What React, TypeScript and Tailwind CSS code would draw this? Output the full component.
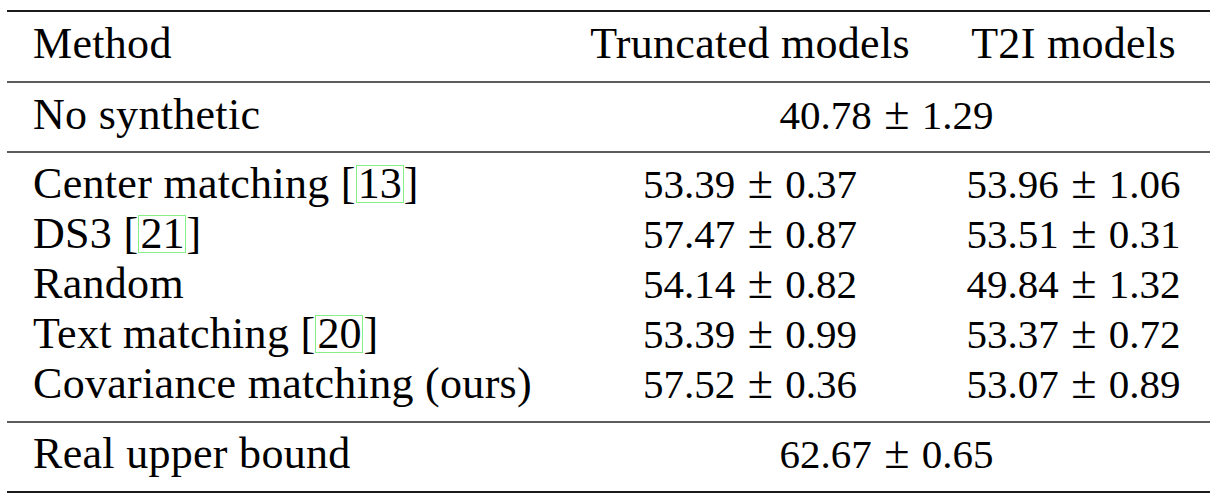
import React from "react";

type Cell = { a: string; b: string };

const body: { name: string; cite?: string; trunc: Cell; t2i: Cell }[] = [
  { name: "Center matching", cite: "13", trunc: { a: "53.39", b: "0.37" }, t2i: { a: "53.96", b: "1.06" } },
  { name: "DS3", cite: "21", trunc: { a: "57.47", b: "0.87" }, t2i: { a: "53.51", b: "0.31" } },
  { name: "Random", trunc: { a: "54.14", b: "0.82" }, t2i: { a: "49.84", b: "1.32" } },
  { name: "Text matching", cite: "20", trunc: { a: "53.39", b: "0.99" }, t2i: { a: "53.37", b: "0.72" } },
  { name: "Covariance matching (ours)", trunc: { a: "57.52", b: "0.36" }, t2i: { a: "53.07", b: "0.89" } },
];

function PM({ a, b }: Cell) {
  return (
    <span className="text-[41px] tracking-normal whitespace-nowrap">
      {a}
      <span className="inline-block w-[32px] mx-[9px] text-center text-[46px] leading-none">±</span>
      {b}
    </span>
  );
}

function Name({ name, cite }: { name: string; cite?: string }) {
  if (!cite) return <>{name}</>;
  return (
    <>
      {name} [
      <span className="inline-block border border-[#86f086] px-[1px] leading-[36px] tracking-normal">{cite}</span>]
    </>
  );
}

// grid row: method column + two value columns
function Row({ children, className = "" }: { children: React.ReactNode; className?: string }) {
  return (
    <div className={`grid grid-cols-[556px_374px_273px] items-baseline leading-[50px] ${className}`}>
      {children}
    </div>
  );
}

function Rule({ thick }: { thick?: boolean }) {
  return <div className={thick ? "h-[2px] bg-[#1c1c1c]" : "h-[2px] bg-[#5c5c5c]"} />;
}

export default function App() {
  return (
    <div className="w-[1220px] h-[502px] bg-white pt-[10px] pl-[7px] text-black font-['Liberation_Serif',serif] text-[44px] tracking-[0.3px]">
      <div className="w-[1203px]">
        <Rule thick />
        <Row className="pt-[7px] pb-[12px]">
          <div className="pl-[26px] whitespace-nowrap">Method</div>
          <div className="text-center whitespace-nowrap">Truncated models</div>
          <div className="text-center whitespace-nowrap">T2I models</div>
        </Row>
        <Rule />
        <Row className="pt-[7px] pb-[11px]">
          <div className="pl-[26px] whitespace-nowrap">No synthetic</div>
          <div className="col-span-2 text-center">
            <PM a="40.78" b="1.29" />
          </div>
        </Row>
        <Rule />
        <div className="pt-[6px] pb-[12px]">
          {body.map((r) => (
            <Row key={r.name}>
              <div className="pl-[26px] whitespace-nowrap">
                <Name name={r.name} cite={r.cite} />
              </div>
              <div className="text-center">
                <PM {...r.trunc} />
              </div>
              <div className="text-center">
                <PM {...r.t2i} />
              </div>
            </Row>
          ))}
        </div>
        <Rule />
        <Row className="pt-[6px] pb-[12px]">
          <div className="pl-[26px] whitespace-nowrap">Real upper bound</div>
          <div className="col-span-2 text-center">
            <PM a="62.67" b="0.65" />
          </div>
        </Row>
        <Rule thick />
      </div>
    </div>
  );
}
